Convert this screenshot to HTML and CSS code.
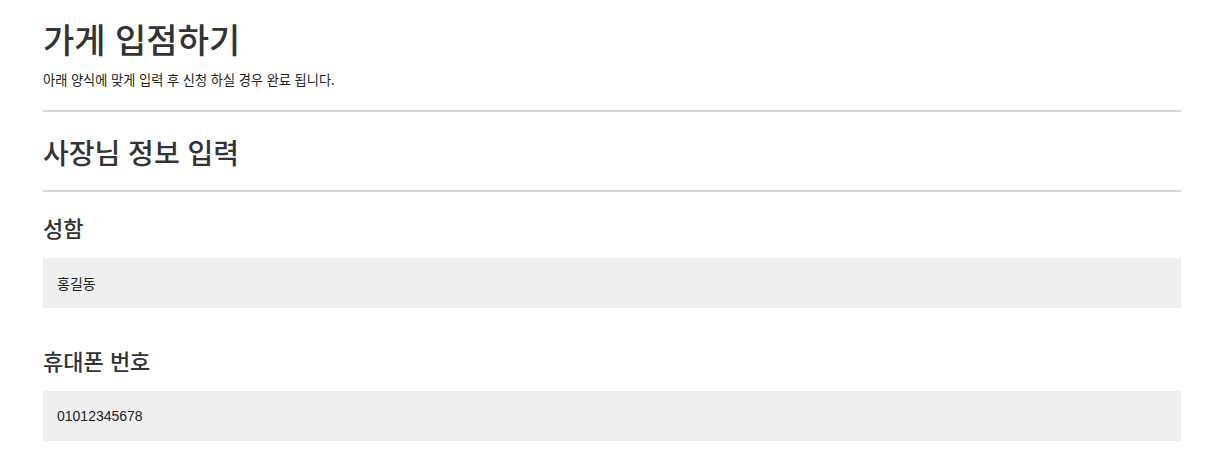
FILE: index.html
```html
<!DOCTYPE html>
<html lang="ko">
<head>
<meta charset="utf-8">
<link rel="stylesheet" href="styles.css">
</head>
<body>
<div class="page">
  <header class="head">
    <h1 class="title">가게 입점하기</h1>
    <p class="desc">아래 양식에 맞게 입력 후 신청 하실 경우 완료 됩니다.</p>
  </header>
  <section class="section">
    <h2 class="section-title">사장님 정보 입력</h2>
    <div class="field">
      <label class="label" for="name">성함</label>
      <input class="input" id="name" type="text" value="홍길동">
    </div>
    <div class="field">
      <label class="label" for="phone">휴대폰 번호</label>
      <input class="input" id="phone" type="text" value="01012345678">
    </div>
  </section>
</div>
</body>
</html>
```
FILE: styles.css
```css
* { box-sizing: border-box; }
html, body { margin: 0; padding: 0; background: #fff; }
body {
  font-family: "Noto Sans CJK KR", "Noto Sans", sans-serif;
  color: #222;
}
.page {
  width: 1138px;
  margin-left: 43px;
}
.head {
  padding-top: 15px;
  padding-bottom: 21px;
  border-bottom: 2px solid #d6d6d6;
}
.title {
  margin: 0;
  font-size: 34px;
  font-weight: 500;
  line-height: 48px;
  color: #333;
}
.desc {
  margin: 8px 0 0;
  font-size: 13.2px;
  line-height: 18px;
  color: #222;
}
.section-title {
  margin: 0;
  padding: 20px 0 18px;
  font-size: 28px;
  font-weight: 500;
  line-height: 40px;
  border-bottom: 2px solid #d6d6d6;
  color: #333;
}
.field {
  display: flex;
  flex-direction: column;
}
.field + .field {
  margin-top: 17px;
}
.label {
  padding: 19px 0 15px;
  font-size: 22px;
  font-weight: 500;
  line-height: 32px;
  color: #333;
}
.input {
  height: 50px;
  border: none;
  outline: none;
  background: #eeeeee;
  padding: 0 14px;
  font-family: "Liberation Sans", "Noto Sans CJK KR", sans-serif;
  font-size: 14px;
  color: #222;
}
```
